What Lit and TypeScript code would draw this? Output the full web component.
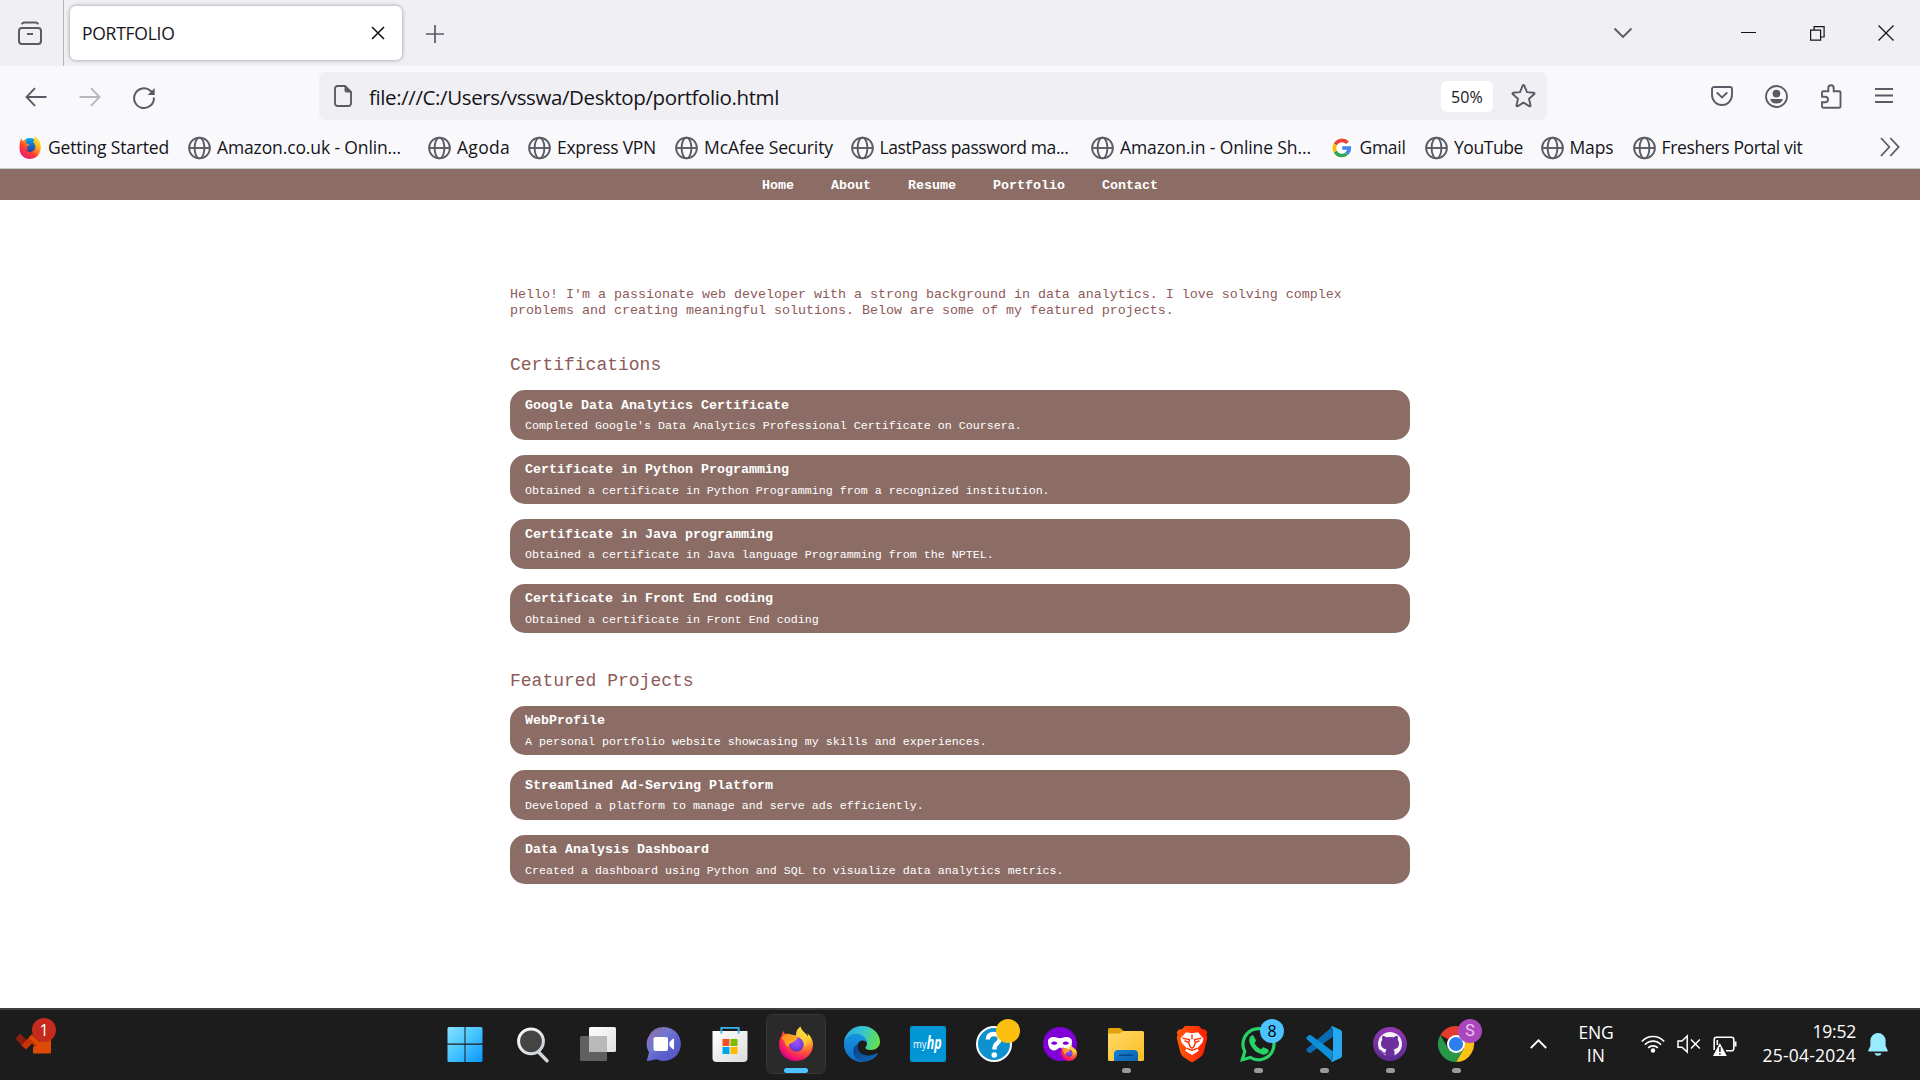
import { LitElement, html, css, svg, nothing } from "lit";
import { customElement, property } from "lit/decorators.js";

/** A one-line label whose tracking is tuned so the text fills a given width. */
@customElement("fit-label")
class FitLabel extends LitElement {
  @property({ type: Number }) width = 0;
  @property() text = "";
  static styles = css`
    :host { display: inline-block; white-space: nowrap; }
  `;
  render() {
    return html`<span>${this.text}</span>`;
  }
  updated() {
    const span = this.renderRoot.querySelector("span") as HTMLElement;
    span.style.letterSpacing = "0";
    const natural = span.getBoundingClientRect().width;
    if (this.width && natural) {
      span.style.letterSpacing = `${(this.width - natural) / this.text.length}px`;
    }
  }
}

const globe = svg`<g fill="none" stroke="#5b5b66" stroke-width="1.9"><circle cx="11.500" cy="12" r="10.400"/><ellipse cx="11.500" cy="12" rx="4.900" ry="10.400"/><path d="M1.100 12H21.900"/></g>`;

const foxArt = svg`
  <defs>
    <radialGradient id="fx-body" cx=".78" cy=".12" r="1"><stop offset=".1" stop-color="#fff044"/><stop offset=".35" stop-color="#ffb52e"/><stop offset=".6" stop-color="#ff5a36"/><stop offset=".85" stop-color="#f5156c"/><stop offset="1" stop-color="#c60084"/></radialGradient>
    <radialGradient id="fx-core" cx=".5" cy=".35" r=".7"><stop offset="0" stop-color="#a04fff"/><stop offset=".6" stop-color="#7542e5"/><stop offset="1" stop-color="#4d2fb8"/></radialGradient>
    <linearGradient id="fx-head" x1="0" y1="0" x2="1" y2="1"><stop offset="0" stop-color="#ff8a16"/><stop offset="1" stop-color="#ffb92e"/></linearGradient>
  </defs>
  <path fill="url(#fx-body)" d="M22.6 0.5c.3 2.8 2.5 4.6 4.6 6.7 1.200 1.200 2.100 2.200 2.800 3.600 0-1.200-.2-2.400-.7-3.500 3.900 3 5.700 7 5.700 11.300C35 28 27.600 35 18 35S1 28 1 18.500c0-3.600.9-6.500 2.600-8.700.2-2 .9-3.600 2.100-4.900.2 1.300.6 2.300 1.400 3.200 1.600-.5 3.200-.5 4.800.1L18 9.500C17.800 5.800 19.300 2.400 22.600.5Z"/>
  <circle cx="18.500" cy="18.500" r="7.200" fill="url(#fx-core)"/>
  <path fill="url(#fx-head)" d="M3.600 12.500c1.200-2.800 3.200-4.400 6-4.400 2.200 0 4 .9 5 2.700 2 .1 4 .2 5 1-.5 2.100-2 3.100-4.300 3.900-.4 1-1.800 1.500-3.300 2-1.800.7-2 2-1 3.800-2.800-1.200-4.300-3.100-4.200-5.900Z"/>
  <path fill="#ffcf36" opacity=".85" d="M22.600 1c0 4 4.700 6 5.800 10.500 1 4-.2 8-3 10.300 1.700-4.800.5-8.300-3.200-11-2.600-2-2.200-7 .4-9.800Z"/>
`;

const oldFox = svg`
  <defs>
    <linearGradient id="of" x1=".9" y1="0" x2=".2" y2="1"><stop offset="0" stop-color="#fff23a"/><stop offset=".35" stop-color="#ffb020"/><stop offset=".65" stop-color="#ff3d2e"/><stop offset="1" stop-color="#e31587"/></linearGradient>
    <linearGradient id="oc" x1="0" y1="0" x2="0" y2="1"><stop offset="0" stop-color="#00a8f5"/><stop offset="1" stop-color="#2b2f96"/></linearGradient>
  </defs>
  <circle cx="11" cy="10" r="8" fill="url(#oc)"/>
  <path fill="url(#of)" d="M15 0c1.500 1.200 4.600 2.600 6 6.500 2.800 8-1.800 16.500-10 16.500C5 23 .5 18.500.5 12.500c0-4 .2-7 1.800-10.500l1 2.800C5 4 6.500 4 8.600 4.800 7 5.500 6.500 6.500 7 7.500l3.500.7C10 9.700 8 9.900 7.800 11c0 1 .8 1.500 1.200 1.700-1.500.5-1.400 2-.2 2.600 2.800 1.500 6.900 0 7.400-3.500.4-3-.9-4.800-2.400-6C15.500 4.500 15.800 2 15 0Z"/>
`;

const googleG = svg`
  <circle cx="11.500" cy="12" r="11" fill="#fff"/>
  <g fill="none" stroke-width="3.600"><path stroke="#ea4335" d="M4.300 8.300A7.400 7.400 0 0 1 16.400 6.900"/><path stroke="#fbbc05" d="M4.300 8.300a7.400 7.400 0 0 0 0 7.300"/><path stroke="#34a853" d="M4.300 15.600a7.400 7.400 0 0 0 11.600 1.900"/><path stroke="#4285f4" d="M15.800 17.600A7.400 7.400 0 0 0 18.300 12H11.200"/></g>
`;

interface Bookmark { label: string; slot: number; width: number; icon?: unknown }
const bookmarks: Bookmark[] = [
  { label: "Getting Started", slot: 169, width: 121, icon: oldFox },
  { label: "Amazon.co.uk - Onlin...", slot: 240, width: 184 },
  { label: "Agoda", slot: 100, width: 53 },
  { label: "Express VPN", slot: 147, width: 99 },
  { label: "McAfee Security", slot: 175.5, width: 129 },
  { label: "LastPass password ma...", slot: 240.5, width: 189 },
  { label: "Amazon.in - Online Sh...", slot: 239.500, width: 191 },
  { label: "Gmail", slot: 94.5, width: 46, icon: googleG },
  { label: "YouTube", slot: 115.5, width: 69 },
  { label: "Maps", slot: 92, width: 44 },
  { label: "Freshers Portal vit", slot: 175, width: 141 },
];

const menu = ["Home", "About", "Resume", "Portfolio", "Contact"];

const sections = [
  {
    title: "Certifications",
    cards: [
      ["Google Data Analytics Certificate", "Completed Google's Data Analytics Professional Certificate on Coursera."],
      ["Certificate in Python Programming", "Obtained a certificate in Python Programming from a recognized institution."],
      ["Certificate in Java programming", "Obtained a certificate in Java language Programming from the NPTEL."],
      ["Certificate in Front End coding", "Obtained a certificate in Front End coding"],
    ],
  },
  {
    title: "Featured Projects",
    cards: [
      ["WebProfile", "A personal portfolio website showcasing my skills and experiences."],
      ["Streamlined Ad-Serving Platform", "Developed a platform to manage and serve ads efficiently."],
      ["Data Analysis Dashboard", "Created a dashboard using Python and SQL to visualize data analytics metrics."],
    ],
  },
];

interface Task { art: unknown; state?: "active" | "open"; badge?: string; badgeText?: string }
const tasks: Task[] = [
  { art: svg`
    <defs><linearGradient id="wn" gradientUnits="userSpaceOnUse" x1="0" y1="0" x2="36" y2="36"><stop offset="0" stop-color="#8ae0ff"/><stop offset=".45" stop-color="#4cc8ff"/><stop offset="1" stop-color="#0a95ff"/></linearGradient></defs>
    <g fill="url(#wn)" transform="translate(-1 0)"><path d="M2 1H17.500V17.500H.5V2.500A1.500 1.500 0 0 1 2 1Z"/><path d="M18.500 1H34a1.500 1.500 0 0 1 1.500 1.500V17.500h-17Z"/><path d="M.5 18.800h17V36H2a1.500 1.500 0 0 1-1.500-1.500Z"/><path d="M18.500 18.800h17V34.500A1.500 1.500 0 0 1 34 36H18.500Z"/></g>` },
  { art: svg`<defs><linearGradient id="sr" x1="0" y1="0" x2="1" y2="1"><stop offset="0" stop-color="#fff"/><stop offset="1" stop-color="#c8cdd8"/></linearGradient></defs>
    <path d="M24.500 26 33 34.800" stroke="#d2d6df" stroke-width="3.400" stroke-linecap="round"/><circle cx="17" cy="15.300" r="12.400" fill="#444" stroke="url(#sr)" stroke-width="3"/>` },
  { art: svg`<defs><linearGradient id="tv" x1="0" y1="0" x2="1" y2="1"><stop offset="0" stop-color="#fff"/><stop offset="1" stop-color="#e0e0e0"/></linearGradient></defs>
    <rect x="0" y="10" width="27" height="25" rx="1.500" fill="#606060"/><rect x="9" y="1" width="27" height="25" rx="1.500" fill="url(#tv)"/><path d="M9 10h18v16H10.500a1.500 1.500 0 0 1-1.500-1.500Z" fill="#b9b9b9"/>` },
  { art: svg`<defs><linearGradient id="ch" x1="0" y1="0" x2="1" y2="1"><stop offset="0" stop-color="#9a6a9c"/><stop offset=".4" stop-color="#6f78cf"/><stop offset=".65" stop-color="#5a5fd0"/><stop offset="1" stop-color="#5558b8"/></linearGradient></defs>
    <path fill="url(#ch)" d="M18 1a17 17 0 1 1-7.500 32.300L2 35c-.8.100-1.200-.3-1-1l2-7.500A17 17 0 0 1 18 1Z"/><rect x="7.500" y="11" width="14.500" height="14" rx="2" fill="#fff"/><path fill="#fff" d="M23.500 16 27 12.800q1-.6 1 .6v9.400q0 1-1 .4L23.500 20Z"/>` },
  { art: svg`<defs><linearGradient id="st" x1="0" y1="0" x2="1" y2="1"><stop offset="0" stop-color="#fff"/><stop offset="1" stop-color="#dcdcdc"/></linearGradient></defs>
    <path d="M.5 5H35.500V32a4 4 0 0 1-4 4H4.500a4 4 0 0 1-4-4Z" fill="url(#st)"/><path d="M9.300 7.500V1.900H26.700V7.500" fill="none" stroke="#36b4ef" stroke-width="1.800"/>
    <path fill="#f25022" d="M10.500 13h7v7h-7Z"/><path fill="#7fba00" d="M18.500 13h7v7h-7Z"/><path fill="#00a4ef" d="M10.500 21h7v7h-7Z"/><path fill="#ffb900" d="M18.500 21h7v7h-7Z"/>` },
  { art: foxArt, state: "active" },
  { art: svg`<defs><linearGradient id="e1" x1="0" y1=".3" x2="1" y2=".5"><stop offset="0" stop-color="#2aa6e8"/><stop offset=".5" stop-color="#35c7cf"/><stop offset="1" stop-color="#66e04b"/></linearGradient><linearGradient id="e2" x1="0" y1="0" x2="0" y2="1"><stop offset="0" stop-color="#1396e2"/><stop offset="1" stop-color="#0f6cc4"/></linearGradient><linearGradient id="e3" x1="0" y1="0" x2="1" y2="1"><stop offset="0" stop-color="#0c3f84"/><stop offset="1" stop-color="#1268bd"/></linearGradient></defs>
    <path fill="url(#e2)" d="M0 17C1 11 6 8 12 8c7 0 11 4 11 8.500-3-3.500-8.500-2.500-9.500 2.500-1 6 4 13 10 15.500-3.600 1.800-8 2-12 .3C4 32-.5 25 0 17Z"/>
    <path fill="url(#e3)" d="M13.300 18c-1.300 7 4.700 11.500 11.200 11.500 3.500 0 6-1 8-2.200 1-.5 1.500.3 1 1C29 35 21 37.200 14.500 34.500 8.500 31 7 22 13.300 18Z"/>
    <path fill="url(#e1)" d="M0 17C.5 7.500 8.500 0 18 0c11 0 18 8 18 15.500 0 5.500-4 8.500-9 8.500-4 0-6-1.500-5.500-2.500.4-.8 1.500-1.700 1.500-4C23 12 18 8 12 8 6 8 1.500 12 0 17Z"/>` },
  { art: svg`<rect width="36" height="36" rx="2" fill="#0096d6"/><text x="3" y="21.500" class="my" textLength="13.500" lengthAdjust="spacingAndGlyphs">my</text><text x="16.800" y="22.500" class="hp" textLength="15" lengthAdjust="spacingAndGlyphs">hp</text>` },
  { art: svg`<circle cx="18" cy="18" r="17" fill="#0d91cf" stroke="#fff" stroke-width="2"/><path d="M11.800 13.500C12 9.500 14.500 8 17.800 8c3.700 0 6 1.900 6 5 0 4.200-5.300 4.200-5.300 8.500v2" fill="none" stroke="#fff" stroke-width="4.400"/><circle cx="18.300" cy="29" r="2.800" fill="#fff"/>`, badge: "amber", badgeText: "" },
  { art: svg`<circle cx="18" cy="18" r="17" fill="#8000d7"/><path fill="#fff" d="M6 15.500c0-3 2.500-4.600 5.800-4.600 2.800 0 4.500 1.300 6.200 1.300s3.400-1.300 6.200-1.300c3.300 0 5.800 1.600 5.800 4.600 0 5-2.200 9-6 9-3 0-3.700-2.800-6-2.800s-3 2.800-6 2.800c-3.800 0-6-4-6-9Z"/><path fill="#8000d7" d="M9 17.300c1.400-2.400 5-2.400 6.500 0-1.600 2-5 2-6.500 0ZM20.500 17.300c1.400-2.400 5-2.400 6.500 0-1.600 2-5 2-6.500 0Z"/><svg x="18.500" y="18.500" width="17" height="17" viewBox="0 0 36 36">${foxArt}</svg>` },
  { art: svg`<defs><linearGradient id="fd" x1="0" y1="0" x2="1" y2="1"><stop offset="0" stop-color="#ffd868"/><stop offset="1" stop-color="#fcbf22"/></linearGradient><linearGradient id="fb" x1="0" y1="0" x2="1" y2="1"><stop offset="0" stop-color="#1482d8"/><stop offset="1" stop-color="#0a62ad"/></linearGradient></defs>
    <path fill="#e2a30b" d="M0 3.500A1.500 1.500 0 0 1 1.500 2H11q1.500 0 2.500 1L17 6.500 12 10H0Z"/><path fill="url(#fd)" d="M0 9q0-1.500 1.500-1.500H10Q12 7.500 13 6.500 14.500 5 16 5H34.500A1.500 1.500 0 0 1 36 6.500V33.500A1.500 1.500 0 0 1 34.500 35H1.500A1.500 1.500 0 0 1 0 33.500Z"/><path fill="url(#fb)" d="M6 35V28a4 4 0 0 1 4-4H26a4 4 0 0 1 4 4v7Z"/><path d="M11 29.200H25" stroke="#084a86" stroke-width="1.600"/>`, state: "open" },
  { art: svg`<defs><linearGradient id="bv" x1="0" y1="0" x2="1" y2="0"><stop offset="0" stop-color="#ff5b00"/><stop offset=".5" stop-color="#ff3d0c"/><stop offset="1" stop-color="#ff1b02"/></linearGradient></defs>
    <path fill="url(#bv)" d="M11 0H25l3.300 3.500C30 3 31 3.500 33.300 6L32.500 9 33.300 12 29.500 27Q28.500 29.500 26.500 31L20 35.500q-2 1-4 0L9.500 31Q7.500 29.500 6.500 27L2.700 12 3.500 9 2.700 6C5 3.500 6 3 7.700 3.500Z"/>
    <path fill="#fff" d="M12 6.200 18 7.300 24 6.200l5.500 6.400-1 4-5 5.500 1.200 3L18 29 11.300 25.100l1.200-3-5-5.500-1-4Z"/>
    <path fill="none" stroke="#ff3d0c" stroke-width="1.500" d="M8.500 12.200 15.500 13.500 14.700 17 16 20.500 18 22.300 20 20.500 21.300 17 20.500 13.500 27.500 12.200M18 8.500V13M10.500 14.800 14 16.200M25.500 14.800 22 16.200M12.500 22.300 18 24.500 23.500 22.300"/>` },
  { art: svg`<path fill="none" stroke="#25d366" stroke-width="3.200" d="M2.300 33.700 4.800 25.500A15.500 15.500 0 1 1 10.500 31.500Z"/><path fill="#25d366" d="M10.600 10.300q1.600-1.700 3-.6l2.300 4.500q.3 1-1.500 3 2.600 4.500 6.700 6.300 1.600-2.300 2.500-2.200l4.700 2.300q1.200.7-.2 3-2.200 2.600-5.600 2-9.400-2.300-12.600-11-1.600-4.400.7-7.300Z"/>`, state: "open", badge: "sky", badgeText: "8" },
  { art: svg`<path fill="#0a6cb0" d="M26.500 0.500 27 10.500 5 26.800Q3.500 27.500 2.500 26.500L.7 24.800Q0 23.500 1 22.500Z"/><path fill="#0e8fd8" d="M1 13.500Q0 12.500.7 11.200L2.500 9.500Q3.500 8.700 5 9.300L27 25.500 26.500 35.500Z"/><path fill="#25a8f0" d="M26.500.2 34.700 4Q36 4.800 36 6V30q0 1.200-1.300 2L26.500 35.800q-1 .2-1.500-.4l2-2.700V3.300L25 .6q.5-.6 1.500-.4Z"/>`, state: "open" },
  { art: svg`<defs><linearGradient id="gh" x1="0" y1="0" x2="0" y2="1"><stop offset="0" stop-color="#9437b5"/><stop offset="1" stop-color="#5a2a91"/></linearGradient></defs><circle cx="18" cy="18" r="17" fill="url(#gh)"/><circle cx="18" cy="18" r="12" fill="#f4f1f7"/><path fill="#6d2f9e" d="M10.500 9.800q1.900-.1 4 1.500 3.500-.8 7 0 2.100-1.600 4-1.500.8 2.100.2 3.900 1.700 2 1.300 4.800-.5 4.300-5.400 4.900 1.100 1 1 3l-.1 3.800h-9v-2.200q-3.500.6-4.500-2-.5-1-1.400-1.600-.8-.8.5-.7 1.200.2 2 1.600 1.200 1.900 3.400 1.100.1-2 1-3-5-.7-5.500-4.900-.4-2.800 1.300-4.800-.6-1.800.2-3.900Z"/>`, state: "open" },
  { art: svg`<path fill="#e33b2e" d="M18 18 2.400 9A18 18 0 0 1 33.600 9Z"/><path fill="#fbc116" d="M18 9H33.600A18 18 0 0 1 18 36L25.800 22.500Z"/><path fill="#279847" d="M18 36A18 18 0 0 1 2.400 9L10.200 22.500 25.800 22.500Z"/><circle cx="18" cy="18" r="9" fill="#fff"/><circle cx="18" cy="18" r="7.100" fill="#2d7ff0"/>`, state: "open", badge: "violet", badgeText: "S" },
];

@customElement("app-root")
class AppRoot extends LitElement {
  static styles = css`
    :host { display: block; }
    * { box-sizing: border-box; }
    svg { display: block; flex: none; overflow: visible; }
    .screen { width: 1920px; height: 1080px; display: flex; flex-direction: column; overflow: hidden; background: #fff; color: #15141a; font-family: "Open Sans", "Noto Sans", sans-serif; }

    .tabs { height: 66px; flex: none; display: flex; align-items: center; background: #f0eff4; }
    .view { width: 64px; height: 66px; padding: 21px 0 0 18px; border-right: 1px solid #b5b4bd; }
    .tab { width: 332px; height: 54px; margin-left: 6px; padding: 0 17px 0 12px; display: flex; align-items: center; justify-content: space-between; background: #fff; border-radius: 6px; box-shadow: 0 0 4px rgba(0,0,0,.38); font-size: 17.500px; }
    .plus { margin: 2px 0 0 23.500px; }
    .grow { flex: 1; }
    .down { margin-right: 109px; }
    .min { margin-right: 54px; }
    .restore { margin-right: 53px; }
    .quit { margin-right: 26px; }

    .tools { height: 60px; flex: none; display: flex; align-items: center; background: #f9f9fb; padding-left: 25px; }
    .back { margin-top: 2px; }
    .fwd { margin: 2px 0 0 32px; opacity: .42; }
    .reload { margin: 3px 0 0 32px; }
    .url { width: 1228px; height: 48px; margin-left: 164px; padding-left: 15px; display: flex; align-items: center; background: #f0eff4; border-radius: 6px; font-size: 20.500px; }
    .path { margin: 1px 0 0 17px; }
    .zoom { width: 52px; height: 31px; margin: 1px 18px 0 0; display: flex; align-items: center; justify-content: center; background: #fff; border-radius: 6px; font-size: 16px; }
    .star { margin-right: 11px; }
    .actions { display: flex; align-items: center; padding-left: 164px; }
    .person { margin: 1px 0 0 32px; }
    .piece { margin-left: 32px; }
    .lines { margin-left: 33px; }

    .marks { height: 43px; flex: none; display: flex; align-items: center; padding: 0 20px 0 19px; background: #f9f9fb; border-bottom: 1px solid #c3ccc6; font-size: 17.500px; }
    .mark { display: flex; align-items: center; gap: 5px; flex: none; height: 40px; }
    .mark svg { position: relative; top: .5px; }

    .menu { height: 31px; flex: none; display: flex; justify-content: center; align-items: center; gap: 37px; padding-top: 2px; background: #8b6d66; color: #fff; font: bold 13.333px/16px "Liberation Mono", "Courier New", monospace; }
    .page { flex: 1; width: 900px; margin: 0 auto; padding-top: 86.500px; color: #8d5a58; font-family: "Liberation Mono", "Courier New", monospace; }
    .intro { margin: 0 0 36.500px; font-size: 13.333px; line-height: 16px; }
    .title { margin: 0 0 14px; font-size: 18px; line-height: 21px; font-weight: 400; }
    .cards { display: flex; flex-direction: column; gap: 15px; margin-bottom: 37.500px; }
    .card { height: 49.500px; padding: 7.500px 15px 0; border-radius: 15px; background: #8b6d66; color: #fff; }
    .name { margin: 0 0 6.500px; font-size: 13.333px; line-height: 16px; font-weight: 700; }
    .desc { margin: 0; font-size: 11.667px; line-height: 13px; }

    .bar { height: 72px; flex: none; display: flex; background: #1c1c1c; border-top: 2px solid #404040; color: #fff; }
    .widget { position: relative; width: 436px; flex: none; padding: 23px 0 0 15px; }
    .note { position: absolute; left: 32px; top: 8px; background: #c42b1c; color: #fff; }
    .badge { width: 24px; height: 24px; border-radius: 50%; display: flex; align-items: center; justify-content: center; font-size: 16px; line-height: 24px; }
    .apps { display: flex; gap: 6px; padding-top: 4px; }
    .app { position: relative; width: 60px; height: 60px; display: flex; align-items: center; justify-content: center; border-radius: 6px; border: 1px solid transparent; }
    .app.active { background: #2a2a2a; border-color: #363636; }
    .app .badge { position: absolute; left: 31px; top: 4px; }
    .app.active::after, .app.open::after { content: ""; position: absolute; bottom: 0; left: 17px; width: 24px; height: 5px; border-radius: 3px; background: #4cc2ff; }
    .app.open::after { left: 25px; width: 9px; background: #9a9a9a; }
    .amber { background: #fdbf0f; }
    .sky { background: #4cc2ff; color: #000; }
    .violet { background: #ab47bc; color: #ecc8f2; font-family: Roboto, sans-serif; }
    .my { font: 11.500px "Open Sans", sans-serif; fill: #fff; }
    .hp { font: italic bold 18px "Open Sans", sans-serif; fill: #fff; }
    .tray { flex: 1; display: flex; align-items: flex-start; font-size: 17.500px; line-height: 24px; }
    .up { margin: 29px 0 0 44px; }
    .lang { width: 50px; margin: 11px 0 0 24px; text-align: center; line-height: 23px; }
    .wifi { margin: 25px 0 0 20px; }
    .mute { margin: 25px 0 0 12px; }
    .power { margin: 26px 0 0 12px; }
    .clock { width: 118px; margin-top: 9px; display: flex; flex-direction: column; align-items: flex-end; }
    .bell { margin: 23px 0 0 12px; }
  `;

  private chrome() {
    return html`
      <div class="tabs">
        <div class="view">
          <svg width="24" height="24" viewBox="0 0 24 24" fill="none" stroke="#5b5b66" stroke-width="2"><path d="M4 3.400Q4.300 1.500 6.500 1.500H17.500Q19.700 1.500 20 3.400"/><rect x="1" y="7" width="22" height="16" rx="3"/><path d="M9 13H15"/></svg>
        </div>
        <div class="tab">
          <fit-label .text=${"PORTFOLIO"} .width=${92.5}></fit-label>
          <svg width="14" height="14" viewBox="0 0 14 14" stroke="#15141a" stroke-width="1.600"><path d="M1 1 13 13M13 1 1 13"/></svg>
        </div>
        <svg class="plus" width="18" height="18" viewBox="0 0 18 18" stroke="#5b5b66" stroke-width="1.700"><path d="M0 9H18M9 0V18"/></svg>
        <div class="grow"></div>
        <svg class="down" width="18" height="10" viewBox="0 0 18 10" fill="none" stroke="#5b5b66" stroke-width="1.900"><path d="M.5.500 9 9 17.500.500"/></svg>
        <svg class="min" width="15" height="2" viewBox="0 0 15 2" fill="#15141a"><path d="M0 0H15V1H0Z"/></svg>
        <svg class="restore" width="15" height="15" viewBox="0 0 15 15" fill="none" stroke="#15141a" stroke-width="1.200"><path d="M.6 4.100H10.600V14.100H.6ZM4.100 4V.6H14.100V11H10.600"/></svg>
        <svg class="quit" width="16" height="16" viewBox="0 0 16 16" stroke="#15141a" stroke-width="1.300"><path d="M.5.500 15.500 15.500M15.500.500.500 15.500"/></svg>
      </div>
      <div class="tools">
        <svg class="back" width="22" height="20" viewBox="0 0 22 20" fill="none" stroke="#5b5b66" stroke-width="1.900"><path d="M10 1.200 1.500 10 10 18.800M1.500 10H21.500"/></svg>
        <svg class="fwd" width="22" height="20" viewBox="0 0 22 20" fill="none" stroke="#5b5b66" stroke-width="1.900"><path d="M12 1.200 20.500 10 12 18.800M20.500 10H.500"/></svg>
        <svg class="reload" width="22" height="22" viewBox="0 0 22 22" fill="none" stroke="#5b5b66" stroke-width="2"><path d="M20.900 10.500A9.900 9.900 0 1 1 17.500 3.700L20 6"/><path d="M21.700 1V8H14.700Z" fill="#5b5b66" stroke="none"/></svg>
        <div class="url">
          <svg width="18" height="22" viewBox="0 0 18 22"><path fill="none" stroke="#5b5b66" stroke-width="1.900" d="M11 1H3.500A2.500 2.500 0 0 0 1 3.500V18.500A2.500 2.500 0 0 0 3.500 21H14.500A2.500 2.500 0 0 0 17 18.500V7Z"/><path fill="#5b5b66" d="M10.500 0 18 7.500H12.500Q10.500 7.500 10.500 5.500Z"/></svg>
          <fit-label class="path" .text=${"file:///C:/Users/vsswa/Desktop/portfolio.html"} .width=${410}></fit-label>
          <div class="grow"></div>
          <div class="zoom"><fit-label .text=${"50%"} .width=${32}></fit-label></div>
          <svg class="star" width="25" height="24" viewBox="0 0 25 24" fill="none" stroke="#5b5b66" stroke-width="1.900" stroke-linejoin="round"><path d="M11.600 1.800q.9-1.500 1.800 0L16 8.100l6.600.6q1.600.3.500 1.600L18 14.700l1.500 6.500q.2 1.600-1.300.9L12.500 18.600 6.800 22.100q-1.500.7-1.300-.9L7 14.700 1.900 10.300Q.8 9 2.400 8.700L9 8.100Z"/></svg>
        </div>
        <div class="actions">
          <svg width="22" height="20" viewBox="0 0 22 20" fill="none" stroke="#5b5b66" stroke-width="1.900"><path d="M3 1H19a2 2 0 0 1 2 2V9A10 10 0 0 1 1 9V3A2 2 0 0 1 3 1Z"/><path d="M5.800 6.500 11 11.500 16.200 6.500"/></svg>
          <svg class="person" width="23" height="23" viewBox="0 0 23 23"><circle cx="11.500" cy="11.500" r="10.500" fill="none" stroke="#5b5b66" stroke-width="1.800"/><circle cx="11.500" cy="8.600" r="3.900" fill="#5b5b66"/><path d="M5.200 14H17.800Q17 18.500 11.500 18.500T5.200 14Z" fill="#5b5b66"/></svg>
          <svg class="piece" width="22" height="25" viewBox="0 0 22 25" fill="none" stroke="#5b5b66" stroke-width="1.900"><path d="M2 8.500Q2 7.300 3.200 7.300H8.300V4A2.700 2.700 0 0 1 13.700 4V7.300H19.500Q20.500 7.300 20.500 8.500V22.500Q20.500 23.700 19.300 23.700H3.200Q2 23.700 2 22.500V18.300H5.200A2.600 2.600 0 0 0 5.200 12.700H2Z"/></svg>
          <svg class="lines" width="18" height="16" viewBox="0 0 18 16" stroke="#5b5b66" stroke-width="1.900"><path d="M0 1H18M0 7.500H18M0 14H18"/></svg>
        </div>
      </div>
      <div class="marks">
        ${bookmarks.map((b) => html`
          <div class="mark" style="width:${b.slot}px">
            <svg width="24" height="24" viewBox="0 0 24 24">${b.icon ?? globe}</svg>
            <fit-label .text=${b.label} .width=${b.width}></fit-label>
          </div>`)}
        <div class="grow"></div>
        <svg width="20" height="18" viewBox="0 0 20 18" fill="none" stroke="#5b5b66" stroke-width="1.800"><path d="M1 0 9.300 9 1 18M10.300 0 18.600 9 10.300 18"/></svg>
      </div>`;
  }

  private taskbar() {
    return html`
      <div class="bar">
        <div class="widget">
          <svg width="37" height="21" viewBox="0 0 37 21"><path fill="#8c1d10" d="M.5 5.500 5 .5 12 7.500 7 13Z"/><path fill="#c93407" d="M6.500 12.500 17 1 27 11 21 15 17 10.500 11 16.500Z"/><path fill="#dd4a06" d="M16 2 24 9 34.500 0H36V19Q36 20.500 34.500 20.500H19Q18 20.500 18 19V14L22 12 14 5Z"/></svg>
          <span class="badge note">1</span>
        </div>
        <div class="apps">
          ${tasks.map((t) => html`
            <div class="app ${t.state ?? ""}">
              <svg width="36" height="36" viewBox="0 0 36 36">${t.art}</svg>
              ${t.badge ? html`<span class="badge ${t.badge}">${t.badgeText}</span>` : nothing}
            </div>`)}
        </div>
        <div class="tray">
          <svg class="up" width="17" height="10" viewBox="0 0 17 10" fill="none" stroke="#fff" stroke-width="1.800"><path d="M.8 9 8.500 1.300 16.200 9"/></svg>
          <div class="lang"><fit-label .text=${"ENG"} .width=${35}></fit-label><br><fit-label .text=${"IN"} .width=${18.5}></fit-label></div>
          <svg class="wifi" width="24" height="18" viewBox="0 0 24 18" fill="none" stroke="#fff" stroke-width="1.700"><path d="M.8 6.500A15 15 0 0 1 23.200 6.500M4 9.700A10.800 10.800 0 0 1 20 9.700M7.200 12.900A6.600 6.600 0 0 1 16.800 12.900"/><circle cx="12" cy="15.500" r="2.200" fill="#fff" stroke="none"/></svg>
          <svg class="mute" width="24" height="18" viewBox="0 0 24 18" fill="none" stroke="#fff" stroke-width="1.500"><path d="M1 6H5L10.200 1V17L5 12.300H1ZM14 4.500 22.800 13.500M22.800 4.500 14 13.500"/></svg>
          <svg class="power" width="25" height="21" viewBox="0 0 25 21"><path fill="none" stroke="#fff" stroke-width="1.600" d="M1.200 14V3.500Q1.200 1.200 3.500 1.200H18.500Q20.800 1.200 20.800 3.500V12.500Q20.800 14.800 18.500 14.800H13M4.300 9V4"/><path fill="#fff" d="M21.500 5.500H23.500V10.500H21.500ZM6.800 7 13.800 20H0Z"/><path d="M6.900 11V16M6.900 17.200V18.800" stroke="#1c1c1c" stroke-width="1.500"/></svg>
          <div class="clock">
            <fit-label .text=${"19:52"} .width=${43.5}></fit-label>
            <fit-label .text=${"25-04-2024"} .width=${93.5}></fit-label>
          </div>
          <svg class="bell" width="20" height="23" viewBox="0 0 20 23" fill="#99ebff"><path d="M10 0A7.600 7.600 0 0 1 17.600 7.600V13L19.800 17.500Q20 18.600 19 18.600H1Q0 18.600.2 17.500L2.400 13V7.600A7.600 7.600 0 0 1 10 0ZM6.300 20.200H13.700Q12.500 22.700 10 22.700T6.300 20.200Z"/></svg>
        </div>
      </div>`;
  }

  render() {
    return html`
      <div class="screen">
        ${this.chrome()}
        <nav class="menu">${menu.map((m) => html`<span>${m}</span>`)}</nav>
        <main class="page">
          <p class="intro">Hello! I'm a passionate web developer with a strong background in data analytics. I love solving complex problems and creating meaningful solutions. Below are some of my featured projects.</p>
          ${sections.map((s) => html`
            <h2 class="title">${s.title}</h2>
            <div class="cards">
              ${s.cards.map(([name, desc]) => html`
                <div class="card"><h3 class="name">${name}</h3><p class="desc">${desc}</p></div>`)}
            </div>`)}
        </main>
        ${this.taskbar()}
      </div>`;
  }
}
